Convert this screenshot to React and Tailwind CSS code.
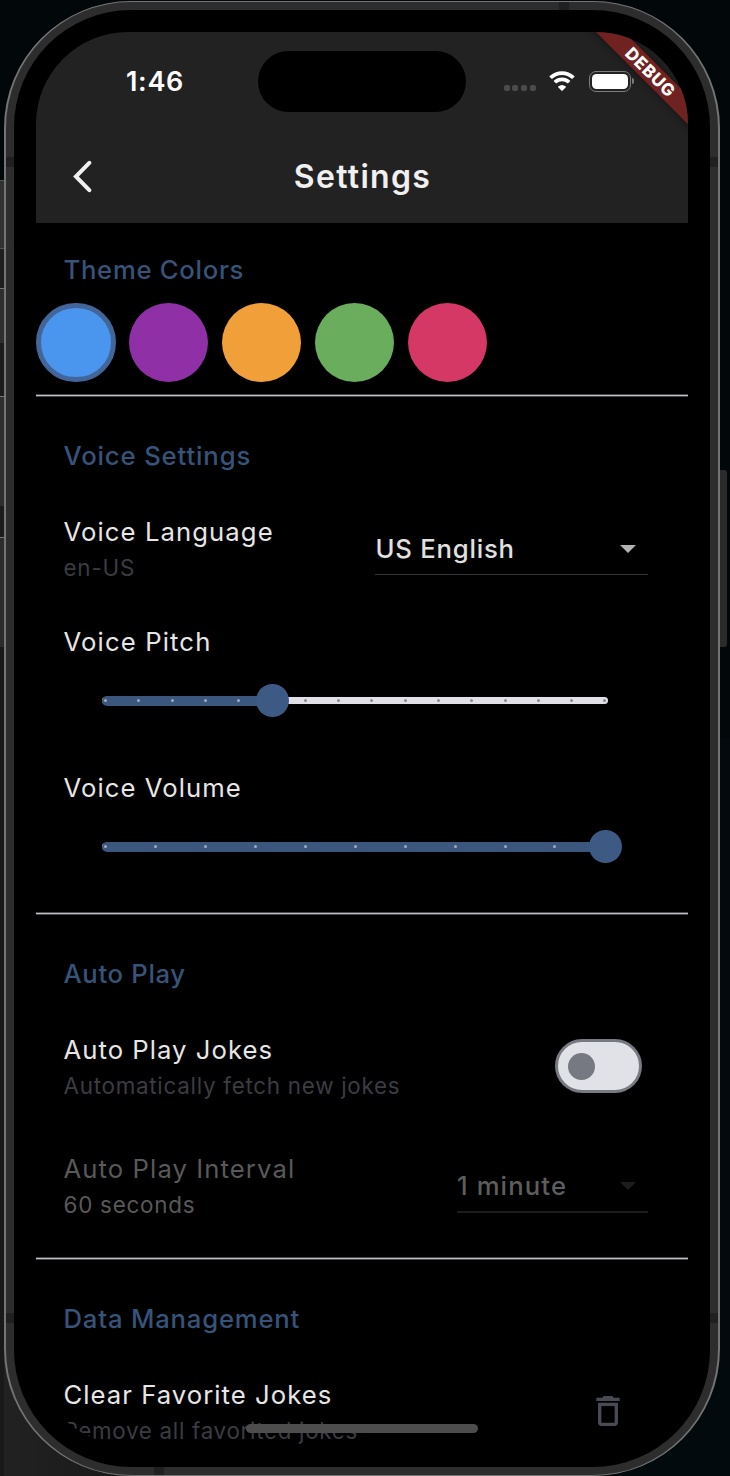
import { MdDeleteOutline } from "react-icons/md";

function Heading({ children, spacing }) {
  return (
    <h2 className={`pl-[27.5px] text-[25.7px] leading-8 font-[450] text-[#365379] ${spacing}`}>
      {children}
    </h2>
  );
}

function Divider() {
  return <hr className="h-[3px] border-y border-[#48494c] bg-[#c0c1c5]" />;
}

function ListText({ title, subtitle, titleClass, subtitleClass }) {
  return (
    <div className="whitespace-nowrap">
      <div className={`text-[25.7px] leading-8 ${titleClass}`}>{title}</div>
      <div className={`mt-1.5 text-[22.4px] leading-7 ${subtitleClass}`}>{subtitle}</div>
    </div>
  );
}

function Caret({ className }) {
  return (
    <svg viewBox="0 0 16 8" className={`h-2 w-4 ${className}`} fill="currentColor">
      <path d="M0 0h16L8 8z" />
    </svg>
  );
}

function Slider({ ticks, value }) {
  const position = 3.5 + value * 499.5;
  return (
    <div className="relative ml-[66px] flex h-[33px] w-[506px] items-center">
      <div className="h-[7px] w-full rounded-full bg-[#e0e0e6]" />
      <div
        className="absolute left-0 h-[10px] rounded-full bg-[#3b577e]"
        style={{ width: position + 3 }}
      />
      <div className="absolute inset-x-0 flex justify-between pr-[1.5px] pl-[2px]">
        {Array.from({ length: ticks }, (_, i) => (
          <span
            key={i}
            className={`size-[3px] rounded-full ${
              i / (ticks - 1) > value ? "bg-[#8c8c93]" : "bg-[#a0abbe]"
            }`}
          />
        ))}
      </div>
      <div
        className="absolute size-[33px] rounded-full bg-[#3c5a84]"
        style={{ left: Math.round(position - 16.4) }}
      />
    </div>
  );
}

function StatusBar() {
  return (
    <div className="flex h-[61px] items-center">
      <div className="w-[132px] pt-px text-[27px] font-semibold tracking-[0.7px] text-white">
        1:46
      </div>
      <div className="h-[61px] w-[208px] rounded-full bg-black" />
      <div className="mt-[13px] ml-[37.5px] flex gap-[2.9px]">
        {[0, 1, 2, 3].map((i) => (
          <span key={i} className="size-[6px] rounded-[2px] bg-[#4c4c4c]" />
        ))}
      </div>
      <svg viewBox="0 0 28 21" className="-mt-px ml-[12px] h-[21px] w-[28px]" fill="#fff">
        <path d="M14 3.9c3.7 0 7.1 1.4 9.7 3.9.2.2.5.2.7 0l1.9-1.9a.6.6 0 0 0 0-.8A17.7 17.7 0 0 0 1.7 5.1a.6.6 0 0 0 0 .8l1.9 1.9c.2.2.5.2.7 0A13.900 13.900 0 0 1 14 3.900z" />
        <path d="M14 10.200c2 0 3.900.8 5.400 2.100.2.2.5.2.7 0l1.900-1.900a.6.6 0 0 0 0-.8 11.700 11.700 0 0 0-16 0 .6.6 0 0 0 0 .8l1.900 1.900c.2.2.5.2.7 0A8 8 0 0 1 14 10.200z" />
        <path d="M17.800 16.300a.5.500 0 0 0 0-.8 5.900 5.900 0 0 0-7.600 0 .5.500 0 0 0 0 .8l3.400 3.500c.2.200.6.200.8 0z" />
      </svg>
      <div className="-mt-px ml-[12.500px] flex items-center gap-[1.500px]">
        <div className="h-[21px] w-[42px] rounded-[7px] border-[1.500px] border-[#7d7d7d] p-[2px]">
          <div className="h-full rounded-[4.500px] bg-white" />
        </div>
        <div className="h-[6px] w-[2px] rounded-r-full bg-[#7d7d7d]" />
      </div>
    </div>
  );
}

function Header() {
  return (
    <header className="h-[191px] bg-[#222222] pt-[19px] pl-[90px]">
      <StatusBar />
      <div className="relative mt-[17px] -ml-[90px] flex h-[96px] items-center justify-center">
        <svg
          viewBox="0 0 22 34"
          className="absolute left-[35px] h-[34px] w-[22px]"
          fill="none"
          stroke="#f0f0f0"
          strokeWidth="4"
          strokeLinecap="round"
        >
          <path d="M18.300 2.800 4.900 16.500l13.400 13.700" />
        </svg>
        <h1 className="pl-px text-[32px] leading-10 font-[580] tracking-[1.300px] text-[#f0f0f0]">
          Settings
        </h1>
      </div>
    </header>
  );
}

function DebugBanner() {
  return (
    <div className="absolute top-[30.500px] left-[524.500px] flex h-[20px] w-[180px] rotate-45 items-center justify-center bg-[#702220] shadow-[0_0_10px_rgba(0,0,0,0.5)]">
      <span className="-translate-x-px text-[17px] leading-none font-extrabold tracking-[0.700px] text-white">
        DEBUG
      </span>
    </div>
  );
}

function Screen() {
  return (
    <div className="relative h-[1413px] w-[652px] overflow-hidden rounded-[92px] bg-black">
      <Header />

      <section className="pt-[31px]">
        <Heading spacing="tracking-[0.700px]">Theme Colors</Heading>
        <div className="mt-[16.500px] mb-3 flex gap-[13.400px]">
          <span className="size-[79.500px] rounded-full border-[5px] border-[#42669a] bg-[#4a95ed]" />
          <span className="size-[79.500px] rounded-full bg-[#9030a7]" />
          <span className="size-[79.500px] rounded-full bg-[#f19f39]" />
          <span className="size-[79.500px] rounded-full bg-[#69ad5d]" />
          <span className="size-[79.500px] rounded-full bg-[#d53864]" />
        </div>
      </section>
      <Divider />

      <section className="pt-[43px] pb-12">
        <Heading spacing="tracking-[0.850px]">Voice Settings</Heading>
        <div className="mt-11 flex justify-between pr-10 pl-[27.500px]">
          <ListText
            title="Voice Language"
            subtitle="en-US"
            titleClass="tracking-[1.080px] text-[#e6e6e6]"
            subtitleClass="tracking-[0.800px] text-[#3b3c42]"
          />
          <div className="mt-[17px] flex h-[42px] w-[273px] justify-between border-b border-[#353535] pr-3 pl-[0.500px]">
            <span className="text-[25.700px] leading-8 font-[450] tracking-[0.780px] text-[#e0e0e0]">
              US English
            </span>
            <Caret className="mt-[12px] text-[#b3b3b3]" />
          </div>
        </div>
        <div className="mt-11 pl-[27.500px] text-[25.700px] leading-8 tracking-[1.130px] text-[#e6e6e6]">
          Voice Pitch
        </div>
        <div className="mt-[26px]">
          <Slider ticks={16} value={1 / 3} />
        </div>
        <div className="mt-[55px] pl-[27.500px] text-[25.700px] leading-8 tracking-[1.050px] text-[#e6e6e6]">
          Voice Volume
        </div>
        <div className="mt-[26px] mb-px">
          <Slider ticks={11} value={1} />
        </div>
      </section>
      <Divider />

      <section className="pt-[43px] pb-[38px]">
        <Heading spacing="tracking-[0.650px]">Auto Play</Heading>
        <div className="mt-11 flex justify-between pr-[46px] pl-[27.500px]">
          <ListText
            title="Auto Play Jokes"
            subtitle="Automatically fetch new jokes"
            titleClass="tracking-[1.030px] text-[#e6e6e6]"
            subtitleClass="tracking-[0.730px] text-[#3b3c42]"
          />
          <div className="mt-[5px] flex h-[54px] w-[87px] items-center rounded-full border-[3.500px] border-[#777983] bg-[#e1e2e7] pl-[10px]">
            <span className="size-[27px] rounded-full bg-[#777982]" />
          </div>
        </div>
        <div className="mt-[53px] flex justify-between pr-10 pl-[27.500px]">
          <ListText
            title="Auto Play Interval"
            subtitle="60 seconds"
            titleClass="tracking-[1.080px] text-[#595959]"
            subtitleClass="tracking-[0.770px] text-[#595959]"
          />
          <div className="mt-[17px] flex h-[43px] w-[191px] justify-between border-b-2 border-[#1c1c1c] pr-3">
            <span className="text-[25.700px] leading-8 font-[450] tracking-[1.100px] text-[#5d5d5d]">
              1 minute
            </span>
            <Caret className="mt-[12px] text-[#1c1c1c]" />
          </div>
        </div>
      </section>
      <Divider />

      <section className="pt-[43px]">
        <Heading spacing="tracking-[0.800px]">Data Management</Heading>
        <div className="mt-11 flex justify-between pr-[60px] pl-[27.500px]">
          <ListText
            title="Clear Favorite Jokes"
            subtitle="Remove all favorited jokes"
            titleClass="tracking-[1.030px] text-[#e6e6e6]"
            subtitleClass="tracking-[0.690px] text-[#3b3c42]"
          />
          <MdDeleteOutline className="mt-[12px] size-10 text-[#494b54]" />
        </div>
      </section>

      <div className="absolute bottom-[12px] left-[210px] h-[9px] w-[232px] rounded-full bg-[#4d4d4d]" />
      <DebugBanner />
    </div>
  );
}

function SideButtons() {
  return (
    <div className="flex h-full w-1 flex-col pt-[180px]">
      <div className="h-[69px] border-y border-[#555] bg-[#303132]" />
      <div className="h-[39px] bg-[#1f1f1e]" />
      <div className="h-[55px] border-t border-[#777] bg-[#2f2e2d]" />
      <div className="h-[53px] bg-[#1d1c1b]" />
      <div className="h-[110px] border-t border-[#777] bg-[#2f2e2d]" />
      <div className="h-[31px] bg-[#1d1c1b]" />
      <div className="h-[110px] border-t border-[#777] bg-[#2c2c2b]" />
      <div className="flex-1 bg-[#1a1918]" />
    </div>
  );
}

export default function App() {
  return (
    <div className="flex h-[1476px] w-[730px] overflow-hidden bg-[linear-gradient(to_bottom,#02070a_50%,transparent_50%),linear-gradient(to_right,#222222_0,#141414_200px,#020a0d_500px)] font-['Inter',sans-serif]">
      <SideButtons />
      <div className="relative mt-px h-[1475px] w-[716px] shrink-0 rounded-[127px] border-x-2 border-y border-[#747474] bg-[#2d2d2d] p-2">
        <span className="absolute top-[155px] left-0 h-[10px] w-2 bg-[#202020]" />
        <span className="absolute top-[155px] right-0 h-[10px] w-2 bg-[#202020]" />
        <span className="absolute top-0 left-[553px] h-2 w-[10px] bg-[#202020]" />
        <span className="absolute bottom-[152px] left-0 h-[10px] w-2 bg-[#202020]" />
        <span className="absolute right-0 bottom-[152px] h-[10px] w-2 bg-[#202020]" />
        <span className="absolute bottom-0 left-[148px] h-2 w-[10px] bg-[#202020]" />
        <div className="h-full rounded-[117px] bg-black p-[22px]">
          <Screen />
        </div>
      </div>
      <div className="mt-[470px] h-[177px] w-[7px] rounded-r-[3px] bg-[#2b2b2b]" />
    </div>
  );
}
